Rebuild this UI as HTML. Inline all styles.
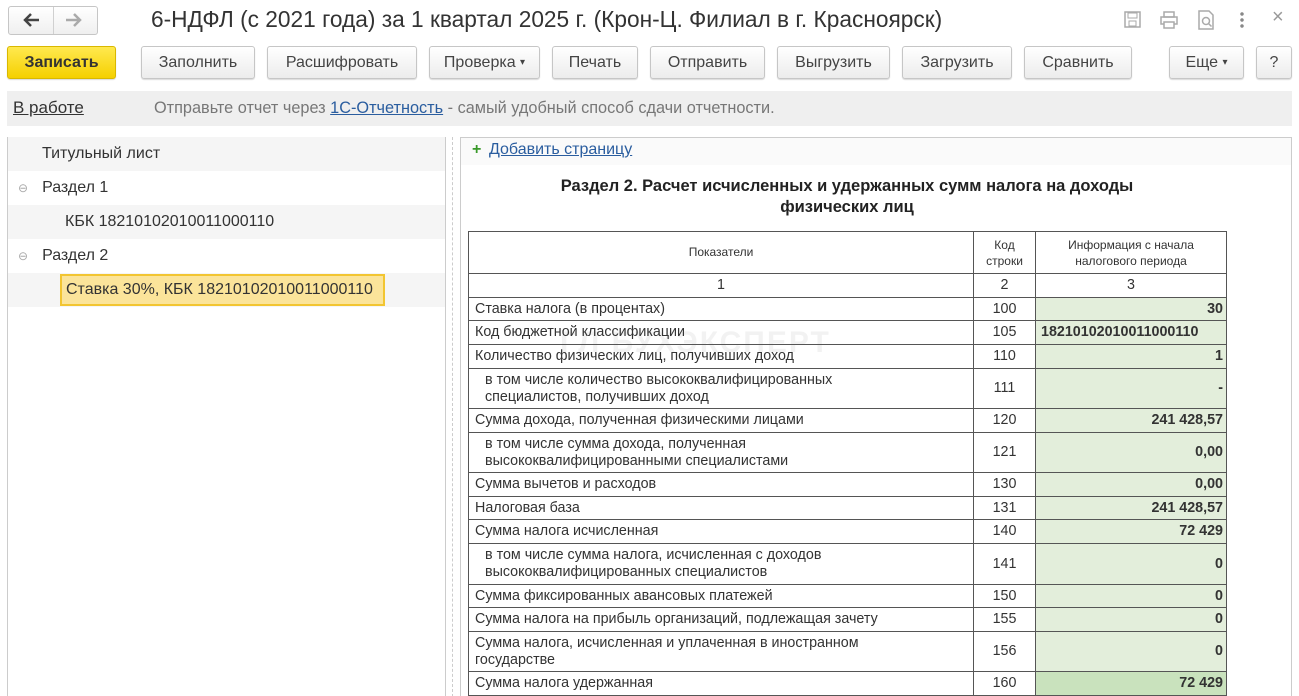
<!DOCTYPE html>
<html><head><meta charset="utf-8"><style>
*{box-sizing:border-box;margin:0;padding:0}
html,body{width:1299px;height:696px;overflow:hidden}
body{background:#fff;font-family:"Liberation Sans",sans-serif;color:#333;position:relative}
.a{position:absolute}
.btn{position:absolute;top:46px;height:33px;border:1px solid #c6c6c6;border-radius:3px;background:linear-gradient(#fff,#ececec);box-shadow:0 1px 1px rgba(0,0,0,.15);font-size:16px;color:#444;display:flex;align-items:center;justify-content:center}
.tree{position:absolute;left:8px;width:437px;height:34px;font-size:16px;display:flex;align-items:center;color:#333}
table{position:absolute;left:468px;top:231px;border-collapse:collapse;font-size:14.3px;color:#333}
td{border:1px solid #555;padding:0 6px;line-height:17px}
td.c{text-align:center}
td.v{background:#e3eedb;text-align:right;font-weight:bold;padding-right:3px}
td.in{padding-left:16px}
</style></head><body>
<div class="a" style="left:8px;top:6px;width:90px;height:29px;border:1px solid #c6c6c6;border-radius:3px;background:linear-gradient(#fff,#efefef)"></div>
<div class="a" style="left:53px;top:7px;width:1px;height:27px;background:#d0d0d0"></div>
<svg class="a" style="left:22px;top:12px" width="18" height="16"><path d="M17 8H3M9 2L3 8l6 6" fill="none" stroke="#444" stroke-width="2.5"/></svg>
<svg class="a" style="left:65px;top:12px" width="18" height="16"><path d="M1 8h14M9 2l6 6-6 6" fill="none" stroke="#aaa" stroke-width="2.5"/></svg>
<div class="a" style="left:151px;top:6px;font-size:22.7px;color:#333">6-НДФЛ (с 2021 года) за 1 квартал 2025 г. (Крон-Ц. Филиал в г. Красноярск)</div>
<svg class="a" style="left:1123px;top:10px" width="20" height="20"><rect x="2" y="2" width="15" height="15" fill="none" stroke="#aaa" stroke-width="1.5"/><rect x="5" y="3" width="9" height="5" fill="none" stroke="#aaa"/><rect x="6" y="11" width="7" height="5" fill="none" stroke="#aaa"/></svg>
<svg class="a" style="left:1159px;top:10px" width="20" height="20"><rect x="5" y="2" width="10" height="5" fill="none" stroke="#aaa" stroke-width="1.5"/><rect x="2" y="7" width="16" height="7" fill="none" stroke="#aaa" stroke-width="1.5"/><rect x="5" y="12" width="10" height="6" fill="#fff" stroke="#aaa" stroke-width="1.5"/></svg>
<svg class="a" style="left:1196px;top:9px" width="20" height="22"><path d="M3 2h10l4 4v14H3z" fill="none" stroke="#aaa" stroke-width="1.5"/><circle cx="10" cy="12" r="3.5" fill="none" stroke="#aaa" stroke-width="1.5"/><path d="M12.5 14.5l3 3" stroke="#aaa" stroke-width="1.5"/></svg>
<div class="a" style="left:1240px;top:11px;width:4px;height:18px;background:radial-gradient(circle,#888 1.5px,transparent 2px) 0 0/4px 6px"></div>
<div class="a" style="left:1272px;top:6px;font-size:20px;color:#999">×</div>

<div class="btn" style="left:7px;width:109px;background:linear-gradient(#ffe94f,#f5d000);border-color:#d9b800;font-weight:bold;color:#333">Записать</div>
<div class="btn" style="left:141px;width:114px">Заполнить</div>
<div class="btn" style="left:267px;width:150px">Расшифровать</div>
<div class="btn" style="left:429px;width:111px">Проверка&nbsp;<span style="font-size:10px">▾</span></div>
<div class="btn" style="left:552px;width:86px">Печать</div>
<div class="btn" style="left:650px;width:115px">Отправить</div>
<div class="btn" style="left:777px;width:113px">Выгрузить</div>
<div class="btn" style="left:902px;width:110px">Загрузить</div>
<div class="btn" style="left:1024px;width:108px">Сравнить</div>
<div class="btn" style="left:1169px;width:75px">Еще&nbsp;<span style="font-size:10px">▾</span></div>
<div class="btn" style="left:1256px;width:36px">?</div>

<div class="a" style="left:7px;top:91px;width:1285px;height:35px;background:#efefef"></div>
<div class="a" style="left:13px;top:98px;font-size:17px;color:#333;text-decoration:underline">В работе</div>
<div class="a" style="left:154px;top:99px;font-size:16.3px;color:#777">Отправьте отчет через <span style="color:#2a5d9f;text-decoration:underline">1С-Отчетность</span> - самый удобный способ сдачи отчетности.</div>

<div class="a" style="left:7px;top:137px;width:439px;height:570px;border:1px solid #ccc"></div>
<div class="tree" style="top:137px;background:#f5f5f5"><span style="margin-left:34px">Титульный лист</span></div>
<div class="tree" style="top:171px"><span style="margin-left:10px;color:#aaa;font-size:12px">⊖</span><span style="margin-left:14px">Раздел 1</span></div>
<div class="tree" style="top:205px;background:#f5f5f5"><span style="margin-left:57px">КБК 18210102010011000110</span></div>
<div class="tree" style="top:239px"><span style="margin-left:10px;color:#aaa;font-size:12px">⊖</span><span style="margin-left:14px">Раздел 2</span></div>
<div class="tree" style="top:273px;background:#f5f5f5"></div>
<div class="a" style="left:60px;top:274px;width:325px;height:32px;background:#fbe49a;border:2px solid #f2c531;font-size:16px;padding:5px 0 0 4px;color:#333">Ставка 30%, КБК 18210102010011000110</div>

<div class="a" style="left:452px;top:137px;width:0;height:560px;border-left:1px dashed #ccc"></div>
<div class="a" style="left:460px;top:137px;width:832px;height:570px;border:1px solid #ccc"></div>
<div class="a" style="left:461px;top:138px;width:830px;height:27px;background:#fafafa"></div>
<div class="a" style="left:472px;top:141px;color:#3a9a2a;font-weight:bold;font-size:16px">+</div>
<div class="a" style="left:489px;top:141px;font-size:16px;color:#2a5d9f;text-decoration:underline">Добавить страницу</div>
<div class="a" style="left:448px;top:176px;width:798px;text-align:center;font-weight:bold;font-size:16.5px;line-height:21px;color:#222">Раздел 2. Расчет исчисленных и удержанных сумм налога на доходы<br>физических лиц</div>
<div class="a" style="left:560px;top:326px;font-size:30px;font-weight:bold;color:rgba(0,0,0,0.05);letter-spacing:2px">ГЛ БУХЭКСПЕРТ</div>

<table>
<colgroup><col style="width:505px"><col style="width:62px"><col style="width:191px"></colgroup>
<tr style="height:42px"><td class="c" style="font-size:12px">Показатели</td><td class="c" style="font-size:12px;line-height:16px">Код<br>строки</td><td class="c" style="font-size:12px;line-height:16px">Информация с начала<br>налогового периода</td></tr>
<tr style="height:24px"><td class="c">1</td><td class="c">2</td><td class="c">3</td></tr>
<tr style="height:23px"><td>Ставка налога (в процентах)</td><td class="c">100</td><td class="v">30</td></tr>
<tr style="height:24px"><td>Код бюджетной классификации</td><td class="c">105</td><td class="v" style="text-align:left;padding-left:5px">18210102010011000110</td></tr>
<tr style="height:24px"><td>Количество физических лиц, получивших доход</td><td class="c">110</td><td class="v">1</td></tr>
<tr style="height:40px"><td class="in">в том числе количество высококвалифицированных<br>специалистов, получивших доход</td><td class="c">111</td><td class="v">-</td></tr>
<tr style="height:24px"><td>Сумма дохода, полученная физическими лицами</td><td class="c">120</td><td class="v">241 428,57</td></tr>
<tr style="height:40px"><td class="in">в том числе сумма дохода, полученная<br>высококвалифицированными специалистами</td><td class="c">121</td><td class="v">0,00</td></tr>
<tr style="height:24px"><td>Сумма вычетов и расходов</td><td class="c">130</td><td class="v">0,00</td></tr>
<tr style="height:23px"><td>Налоговая база</td><td class="c">131</td><td class="v">241 428,57</td></tr>
<tr style="height:24px"><td>Сумма налога исчисленная</td><td class="c">140</td><td class="v">72 429</td></tr>
<tr style="height:41px"><td class="in">в том числе сумма налога, исчисленная с доходов<br>высококвалифицированных специалистов</td><td class="c">141</td><td class="v">0</td></tr>
<tr style="height:23px"><td>Сумма фиксированных авансовых платежей</td><td class="c">150</td><td class="v">0</td></tr>
<tr style="height:24px"><td>Сумма налога на прибыль организаций, подлежащая зачету</td><td class="c">155</td><td class="v">0</td></tr>
<tr style="height:40px"><td>Сумма налога, исчисленная и уплаченная в иностранном<br>государстве</td><td class="c">156</td><td class="v">0</td></tr>
<tr style="height:24px"><td>Сумма налога удержанная</td><td class="c">160</td><td class="v" style="background:#c9e2bd">72 429</td></tr>
</table>
</body></html>
